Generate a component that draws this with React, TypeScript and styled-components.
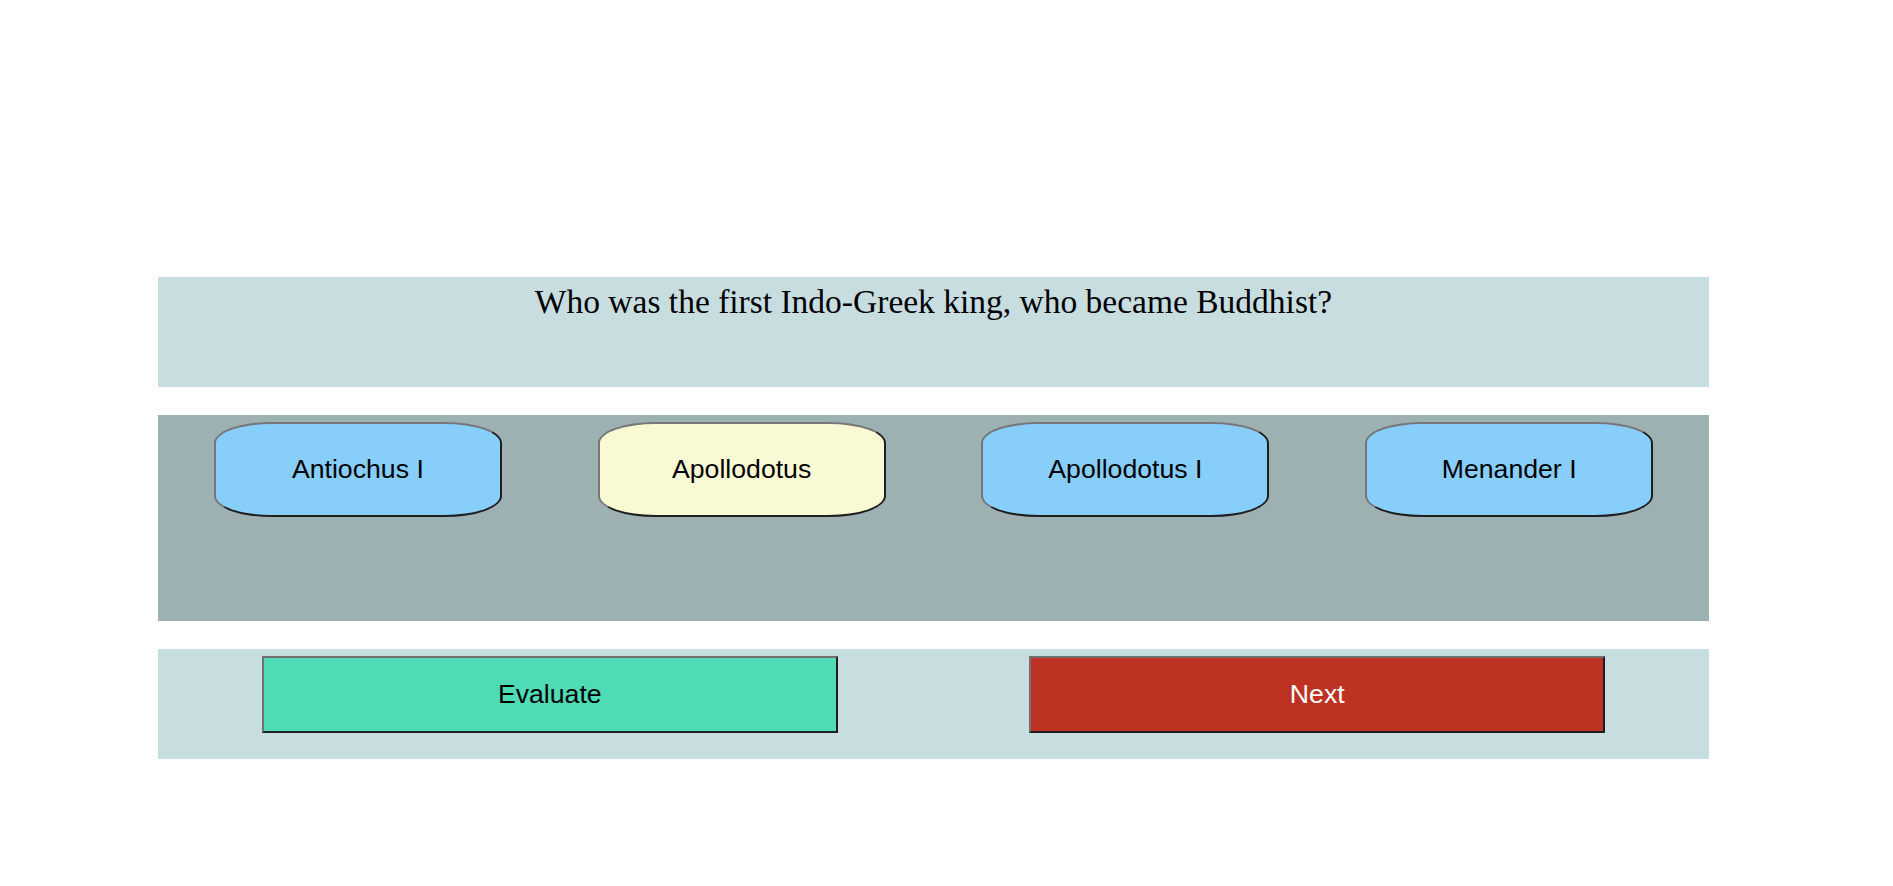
import React, { useState } from "react";
import styled, { createGlobalStyle } from "styled-components";

const GlobalStyle = createGlobalStyle`
    body {
        margin: 8px;
        background: #ffffff;
        font-family: "Liberation Serif", "Times New Roman", serif;
    }
`;

const options = ["Antiochus I", "Apollodotus", "Apollodotus I", "Menander I"];

const App: React.FC = () => {
    const [selected, setSelected] = useState<number>(1);

    return (
        <>
            <GlobalStyle />
            <ContainerQuiz>
                <QuestionPanel>
                    <QuestionText>Who was the first Indo-Greek king, who became Buddhist?</QuestionText>
                </QuestionPanel>

                <OptionsPanel>
                    {options.map((option, index) => (
                        <OptionCell key={option}>
                            <OptionButton
                                $selected={selected === index}
                                onClick={() => setSelected(index)}
                            >
                                {option}
                            </OptionButton>
                        </OptionCell>
                    ))}
                </OptionsPanel>

                <ActionsPanel>
                    <ActionCell>
                        <ActionButton $variant="evaluate">Evaluate</ActionButton>
                    </ActionCell>
                    <ActionCell>
                        <ActionButton $variant="next">Next</ActionButton>
                    </ActionCell>
                </ActionsPanel>
            </ContainerQuiz>
        </>
    );
};

export default App;

const ContainerQuiz = styled.div`
    display: flex;
    flex-direction: column;
    gap: 28px;
    width: 1551px;
    margin-left: 150px;
    padding-top: 269px;
`;

const QuestionPanel = styled.div`
    background: #c8dde0;
    height: 110px;
    box-sizing: border-box;
    padding-top: 6px;
    text-align: center;
`;

const QuestionText = styled.div`
    font-family: "Liberation Serif", "Times New Roman", serif;
    font-size: 33.5px;
    color: #000000;
`;

const OptionsPanel = styled.div`
    display: grid;
    grid-template-columns: repeat(4, 1fr);
    align-items: start;
    background: #9db0b2;
    height: 206px;
    box-sizing: border-box;
    padding: 7px 8px 0;
`;

const OptionCell = styled.div`
    display: flex;
    justify-content: center;
`;

const OptionButton = styled.button<{ $selected: boolean }>`
    width: 75%;
    height: 95px;
    box-sizing: border-box;
    border-width: 2px;
    border-style: solid;
    border-color: #767676 #1f1f1f #1f1f1f #767676;
    border-radius: 20% / 22%;
    background: ${(p) => (p.$selected ? "#f9f9d3" : "#87cefa")};
    color: #000000;
    font-family: "Liberation Sans", Arial, sans-serif;
    font-size: 26.67px;
    cursor: pointer;
    padding: 0;
`;

const ActionsPanel = styled.div`
    display: grid;
    grid-template-columns: 1fr 1fr;
    align-items: start;
    background: #c8dde0;
    height: 110px;
    box-sizing: border-box;
    padding: 7px 8px 0;
`;

const ActionCell = styled.div`
    display: flex;
    justify-content: center;
`;

const ActionButton = styled.button<{ $variant: "evaluate" | "next" }>`
    width: 75%;
    height: 77px;
    box-sizing: border-box;
    border-width: 2px;
    border-style: solid;
    border-color: #707070 #1f1f1f #1f1f1f #707070;
    border-radius: 0;
    background: ${(p) => (p.$variant === "evaluate" ? "#50dbb7" : "#be3223")};
    color: ${(p) => (p.$variant === "evaluate" ? "#000000" : "#ffffff")};
    font-family: "Liberation Sans", Arial, sans-serif;
    font-size: 26.67px;
    cursor: pointer;
    padding: 0;
`;
